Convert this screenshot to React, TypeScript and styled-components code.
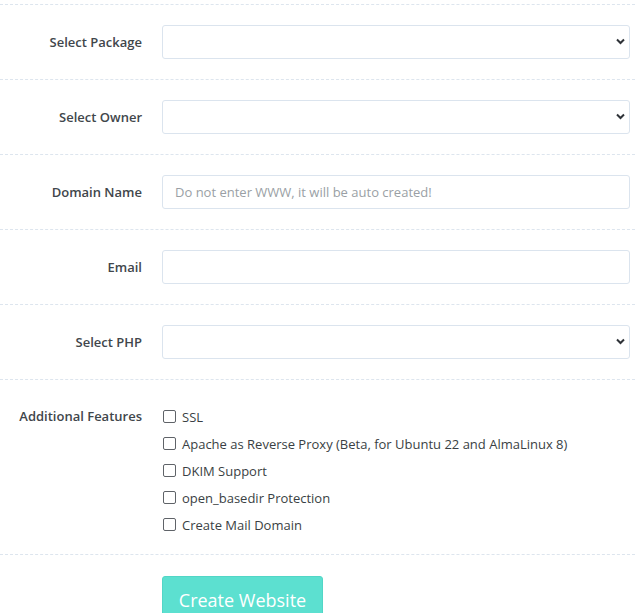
import React from 'react';
import styled, { createGlobalStyle } from 'styled-components';

const GlobalStyle = createGlobalStyle`
  html, body {
    margin: 0;
    padding: 0;
    background: #ffffff;
  }
  body {
    font-family: "Open Sans", "Noto Sans", Arial, sans-serif;
    color: #3a3f44;
  }
`;

const Form = styled.form`
  padding: 4px 2px 0 0;
  width: 635px;
`;

const Row = styled.div<{ $top?: boolean; $align?: 'center' | 'start' }>`
  display: grid;
  grid-template-columns: 142px 468px;
  column-gap: 20px;
  align-items: ${({ $align }) => ($align === 'start' ? 'start' : 'center')};
  padding: 20px 0 20px;
  border-top: ${({ $top }) => ($top ? '1px dashed #dde5ee' : 'none')};
  border-bottom: 1px dashed #dde5ee;
`;

const Label = styled.label<{ $offset?: number }>`
  text-align: right;
  font-size: 13px;
  font-weight: 600;
  color: #41464b;
  line-height: 20px;
  margin-top: ${({ $offset }) => $offset ?? 0}px;
`;

const SelectWrap = styled.div`
  position: relative;
`;

const Select = styled.select`
  appearance: none;
  -webkit-appearance: none;
  display: block;
  box-sizing: border-box;
  width: 100%;
  height: 34px;
  border: 1px solid #dbe4ee;
  border-radius: 3px;
  background: #fff;
  padding: 0 30px 0 12px;
  font-family: inherit;
  font-size: 13px;
  color: #3a3f44;
  outline: none;
`;

const Chevron = styled.svg`
  position: absolute;
  right: 5px;
  top: 13px;
  width: 9px;
  height: 7px;
  pointer-events: none;
`;

const Input = styled.input`
  display: block;
  box-sizing: border-box;
  width: 100%;
  height: 34px;
  border: 1px solid #dbe4ee;
  border-radius: 3px;
  background: #fff;
  padding: 0 12px;
  font-family: inherit;
  font-size: 13px;
  color: #3a3f44;
  outline: none;

  &::placeholder {
    color: #9a9fa5;
  }
`;

const FeatureList = styled.div`
  display: flex;
  flex-direction: column;
  margin-top: 3px;
  margin-bottom: -4px;
`;

const Feature = styled.label`
  display: flex;
  align-items: center;
  height: 27px;
  font-size: 13px;
  color: #3a3f44;
`;

const Check = styled.input`
  appearance: none;
  -webkit-appearance: none;
  box-sizing: border-box;
  width: 13px;
  height: 13px;
  margin: 0 6px 0 1px;
  border: 1px solid #5f6368;
  border-radius: 2px;
  background: #fff;
`;

const Actions = styled.div`
  padding: 21px 0 0 162px;
`;

const SubmitButton = styled.button`
  width: 161px;
  height: 48px;
  border: 1px solid #52d6c6;
  border-radius: 3px;
  background: #5ce0d0;
  color: #ffffff;
  font-family: inherit;
  font-size: 18px;
  font-weight: 400;
  padding: 0;
  cursor: pointer;
`;

const ChevronIcon = () => (
  <Chevron viewBox="0 0 9 7">
    <path d="M1 1.5 L4.5 5 L8 1.5" fill="none" stroke="#2f3338" strokeWidth="2" />
  </Chevron>
);

const SelectField: React.FC = () => (
  <SelectWrap>
    <Select defaultValue="">
      <option value="" />
    </Select>
    <ChevronIcon />
  </SelectWrap>
);

const features = [
  'SSL',
  'Apache as Reverse Proxy (Beta, for Ubuntu 22 and AlmaLinux 8)',
  'DKIM Support',
  'open_basedir Protection',
  'Create Mail Domain',
];

const App: React.FC = () => (
  <>
    <GlobalStyle />
    <Form onSubmit={(e) => e.preventDefault()}>
      <Row $top>
        <Label>Select Package</Label>
        <SelectField />
      </Row>
      <Row>
        <Label>Select Owner</Label>
        <SelectField />
      </Row>
      <Row>
        <Label>Domain Name</Label>
        <Input placeholder="Do not enter WWW, it will be auto created!" />
      </Row>
      <Row>
        <Label>Email</Label>
        <Input />
      </Row>
      <Row>
        <Label>Select PHP</Label>
        <SelectField />
      </Row>
      <Row $align="start">
        <Label $offset={6}>Additional Features</Label>
        <FeatureList>
          {features.map((f) => (
            <Feature key={f}>
              <Check type="checkbox" />
              {f}
            </Feature>
          ))}
        </FeatureList>
      </Row>
      <Actions>
        <SubmitButton type="submit">Create Website</SubmitButton>
      </Actions>
    </Form>
  </>
);

export default App;
